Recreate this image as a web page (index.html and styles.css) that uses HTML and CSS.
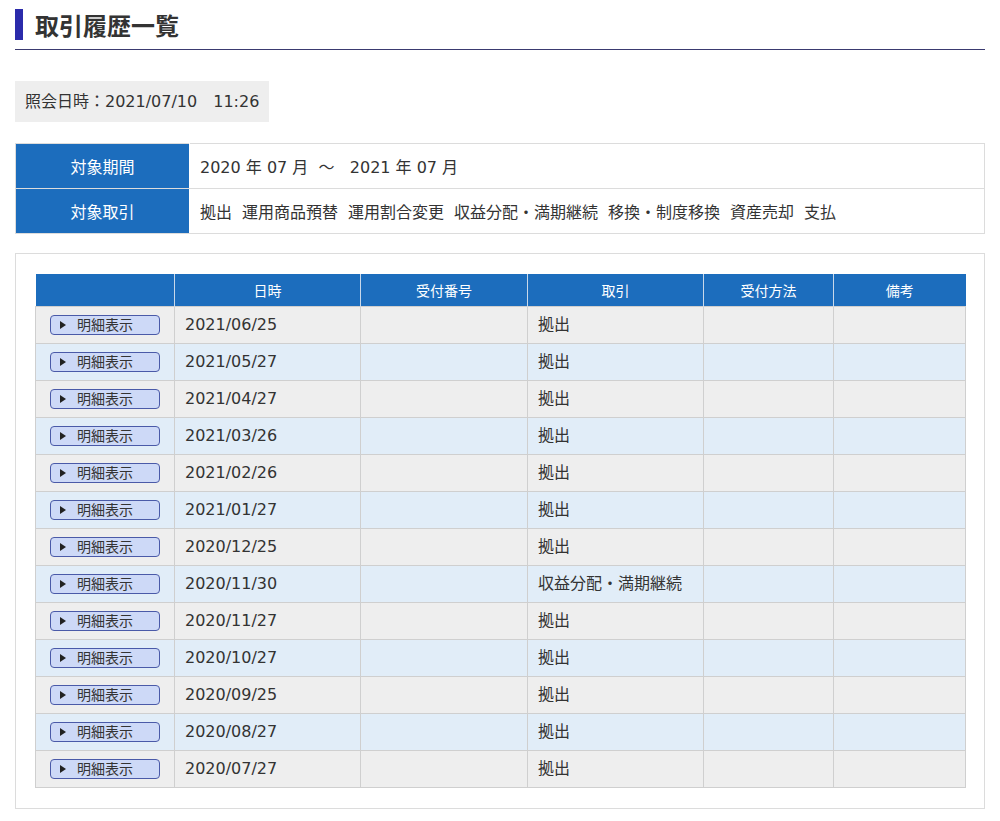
FILE: index.html
```html
<!DOCTYPE html>
<html lang="ja">
<head>
<meta charset="utf-8">
<title>取引履歴一覧</title>
<link rel="stylesheet" href="styles.css">
</head>
<body>
<div class="page">
  <div class="title-wrap"><h1 class="title">取引履歴一覧</h1></div>
  <div class="date-box">照会日時：2021/07/10　11:26</div>
  <table class="filter">
    <tr><th>対象期間</th><td>2020 年 07 月 &nbsp;～ &nbsp; 2021 年 07 月</td></tr>
    <tr><th>対象取引</th><td><span class="kind">拠出</span><span class="kind">運用商品預替</span><span class="kind">運用割合変更</span><span class="kind">収益分配・満期継続</span><span class="kind">移換・制度移換</span><span class="kind">資産売却</span><span class="kind">支払</span></td></tr>
  </table>
  <div class="card">
    <table class="list">
      <colgroup>
        <col class="c1"><col class="c2"><col class="c3"><col class="c4"><col class="c5"><col class="c6">
      </colgroup>
      <thead>
        <tr><th></th><th>日時</th><th>受付番号</th><th>取引</th><th>受付方法</th><th>備考</th></tr>
      </thead>
      <tbody>
        <tr><td class="btn-cell"><span class="btn"><span class="tri"></span>明細表示</span></td><td>2021/06/25</td><td></td><td class="jp">拠出</td><td></td><td></td></tr>
        <tr><td class="btn-cell"><span class="btn"><span class="tri"></span>明細表示</span></td><td>2021/05/27</td><td></td><td class="jp">拠出</td><td></td><td></td></tr>
        <tr><td class="btn-cell"><span class="btn"><span class="tri"></span>明細表示</span></td><td>2021/04/27</td><td></td><td class="jp">拠出</td><td></td><td></td></tr>
        <tr><td class="btn-cell"><span class="btn"><span class="tri"></span>明細表示</span></td><td>2021/03/26</td><td></td><td class="jp">拠出</td><td></td><td></td></tr>
        <tr><td class="btn-cell"><span class="btn"><span class="tri"></span>明細表示</span></td><td>2021/02/26</td><td></td><td class="jp">拠出</td><td></td><td></td></tr>
        <tr><td class="btn-cell"><span class="btn"><span class="tri"></span>明細表示</span></td><td>2021/01/27</td><td></td><td class="jp">拠出</td><td></td><td></td></tr>
        <tr><td class="btn-cell"><span class="btn"><span class="tri"></span>明細表示</span></td><td>2020/12/25</td><td></td><td class="jp">拠出</td><td></td><td></td></tr>
        <tr><td class="btn-cell"><span class="btn"><span class="tri"></span>明細表示</span></td><td>2020/11/30</td><td></td><td class="jp">収益分配・満期継続</td><td></td><td></td></tr>
        <tr><td class="btn-cell"><span class="btn"><span class="tri"></span>明細表示</span></td><td>2020/11/27</td><td></td><td class="jp">拠出</td><td></td><td></td></tr>
        <tr><td class="btn-cell"><span class="btn"><span class="tri"></span>明細表示</span></td><td>2020/10/27</td><td></td><td class="jp">拠出</td><td></td><td></td></tr>
        <tr><td class="btn-cell"><span class="btn"><span class="tri"></span>明細表示</span></td><td>2020/09/25</td><td></td><td class="jp">拠出</td><td></td><td></td></tr>
        <tr><td class="btn-cell"><span class="btn"><span class="tri"></span>明細表示</span></td><td>2020/08/27</td><td></td><td class="jp">拠出</td><td></td><td></td></tr>
        <tr><td class="btn-cell"><span class="btn"><span class="tri"></span>明細表示</span></td><td>2020/07/27</td><td></td><td class="jp">拠出</td><td></td><td></td></tr>
      </tbody>
    </table>
  </div>
</div>
</body>
</html>
```
FILE: styles.css
```css
* { box-sizing: border-box; }
html, body { margin: 0; padding: 0; background: #fff; }
body {
  font-family: "DejaVu Sans", "Noto Sans CJK JP", sans-serif;
  color: #333;
}
.page { padding: 9px 15px 0; }
.title-wrap {
  border-bottom: 1px solid #3a3a70;
  padding-bottom: 9px;
}
.title {
  margin: 0;
  border-left: 8px solid #2b2bab;
  padding-left: 12px;
  height: 31px;
  line-height: 31px;
  font-family: "Noto Sans CJK JP", sans-serif;
  font-size: 24px;
  font-weight: bold;
  color: #333;
}
.date-box {
  display: inline-block;
  margin-top: 31px;
  background: #eee;
  height: 41px;
  line-height: 41px;
  padding: 0 10px;
  font-size: 16px;
  color: #333;
}
.filter {
  margin-top: 21px;
  width: 100%;
  border-collapse: collapse;
  font-size: 16px;
}
.filter th, .filter td {
  border: 1px solid #dcdcdc;
  height: 45px;
  padding: 0;
}
.filter th {
  width: 174px;
  background: #1c6dbd;
  color: #fff;
  font-weight: normal;
  text-align: center;
  border-color: #dcdcdc #fff #dcdcdc #dcdcdc;
}
.filter td { padding-left: 10px; color: #333; }
.kind { margin-right: 10px; }
.card {
  margin-top: 19px;
  border: 1px solid #dcdcdc;
  padding: 20px 19px 20px;
}
.list {
  width: 100%;
  border-collapse: collapse;
  table-layout: fixed;
  font-size: 16px;
}
.c1 { width: 139px; }
.c2 { width: 186px; }
.c3 { width: 167px; }
.c4 { width: 176px; }
.c5 { width: 130px; }
.c6 { width: 132px; }
.list th {
  background: #1c6dbd;
  color: #fff;
  font-weight: normal;
  font-size: 14px;
  height: 32px;
  padding: 0;
  border-left: 1px solid #c8d8ea;
}
.list th:first-child { border-left: none; }
.list td {
  height: 37px;
  padding: 0 0 0 10px;
  border: 1px solid #cfcfcf;
  color: #333;
  line-height: 20px;
}
.list tbody tr:nth-child(odd) td { background: #eeeeee; }
.list tbody tr:nth-child(even) td { background: #e1edf8; }
.list td.btn-cell { padding-left: 14px; }
.btn {
  display: inline-flex;
  align-items: center;
  width: 110px;
  height: 20px;
  border: 1px solid #4a5aa8;
  border-radius: 4px;
  background: #cdd9f7;
  font-size: 14px;
  color: #333;
  padding-left: 9px;
  vertical-align: middle;
}
.tri {
  width: 0;
  height: 0;
  border-top: 4px solid transparent;
  border-bottom: 4px solid transparent;
  border-left: 6px solid #222;
  margin-right: 11px;
}
```
